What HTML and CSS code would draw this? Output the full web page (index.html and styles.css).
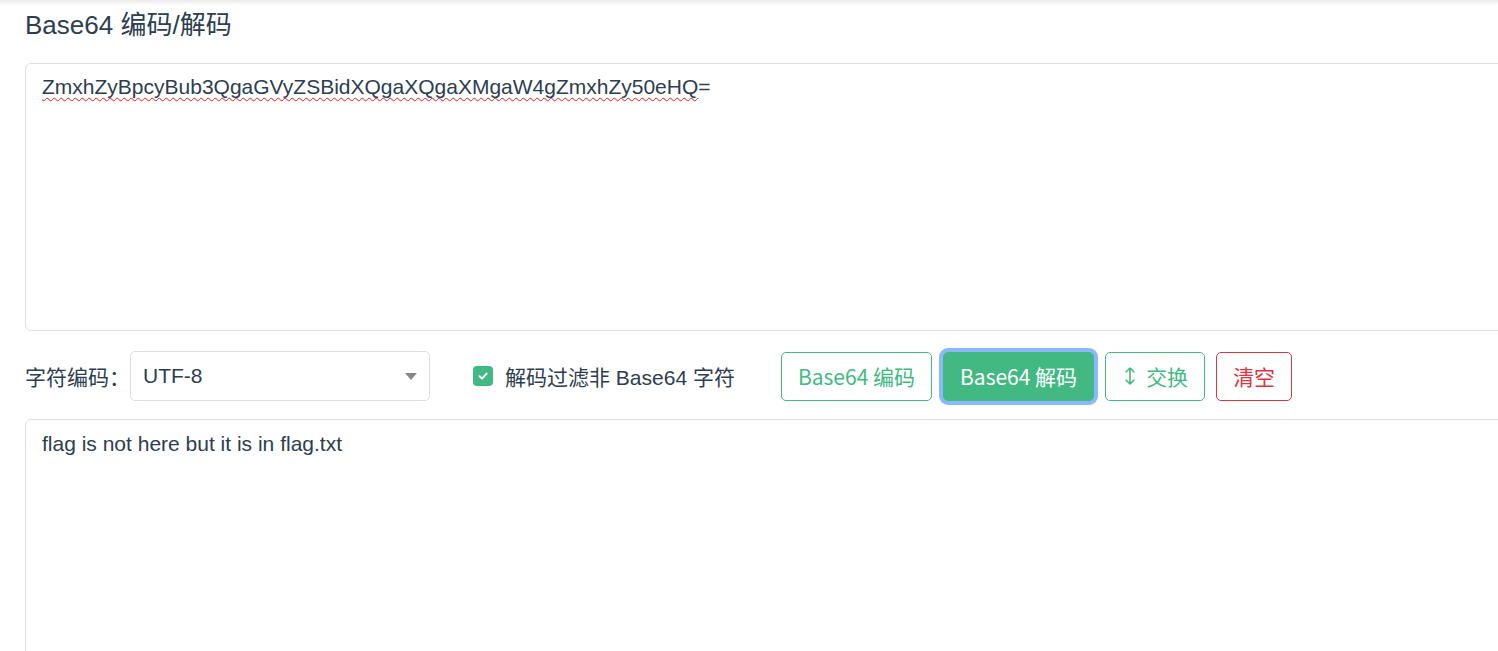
FILE: index.html
```html
<!DOCTYPE html>
<html lang="zh-CN">
<head>
    <meta charset="UTF-8">
    <meta name="viewport" content="width=device-width, initial-scale=1.0">
    <title>Base64 编码/解码</title>
    <link rel="stylesheet" href="styles.css">
</head>
<body>
    <div class="top-shade"></div>
    <div class="tool">
        <h1>Base64 编码/解码</h1>

        <div class="textbox source"><span class="misspelt">ZmxhZyBpcyBub3QgaGVyZSBidXQgaXQgaXMgaW4gZmxhZy50eHQ</span>=</div>

        <div class="controls">
            <label class="field-label">字符编码：</label>
            <div class="select">
                <span>UTF-8</span>
                <span class="caret"></span>
            </div>

            <label class="check">
                <span class="check-box">
                    <svg width="12" height="12" viewBox="0 0 12 12"><path d="M2.5 6.2 L5 8.6 L9.6 3.6" fill="none" stroke="#fff" stroke-width="2" stroke-linecap="round" stroke-linejoin="round"/></svg>
                </span>
                解码过滤非 Base64 字符
            </label>

            <div class="buttons">
                <button class="btn btn-outline">Base64 编码</button>
                <button class="btn btn-fill focused">Base64 解码</button>
                <button class="btn btn-outline">
                    <svg class="swap-icon" width="16" height="20" viewBox="0 0 16 20"><path d="M8 2 V18 M4 6 L8 2 L12 6 M4 14 L8 18 L12 14" fill="none" stroke="#42b983" stroke-width="1.6" stroke-linecap="round" stroke-linejoin="round"/></svg>
                    交换
                </button>
                <button class="btn btn-danger">清空</button>
            </div>
        </div>

        <div class="textbox result">flag is not here but it is in flag.txt</div>
    </div>
</body>
</html>
```

FILE: styles.css
```css
html, body {
    margin: 0;
    padding: 0;
    background: #fff;
    overflow: hidden;
}
body {
    font-family: "Liberation Sans", "Noto Sans CJK SC", sans-serif;
    color: #2c3e50;
}
.top-shade {
    height: 6px;
    margin-bottom: -6px;
    background: linear-gradient(rgba(0, 0, 0, 0.07), rgba(0, 0, 0, 0));
}
.tool {
    width: 1600px;
    padding-left: 25px;
}
h1 {
    margin: 0;
    font-size: 26px;
    font-weight: normal;
    line-height: 50px;
}
.textbox {
    box-sizing: border-box;
    border: 1px solid #dcdfe6;
    border-radius: 6px;
    padding: 8px 16px 7px;
    font-size: 21px;
    line-height: 1.4;
    white-space: pre-wrap;
}
.source {
    margin-top: 13px;
    height: 268px;
}
.misspelt {
    text-decoration: underline wavy #f01818;
    text-decoration-thickness: 1.4px;
    text-underline-offset: 3px;
    text-decoration-skip-ink: none;
}
.result {
    margin-top: 18px;
    height: 300px;
    padding-top: 9px;
}
.controls {
    display: flex;
    align-items: center;
    margin-top: 20px;
    height: 50px;
}
.field-label {
    font-size: 21px;
}
.select {
    box-sizing: border-box;
    width: 300px;
    height: 50px;
    border: 1px solid #dcdfe6;
    border-radius: 5px;
    display: flex;
    align-items: center;
    justify-content: space-between;
    padding: 0 12px;
    font-size: 21px;
}
.caret {
    width: 0;
    height: 0;
    border-left: 6px solid transparent;
    border-right: 6px solid transparent;
    border-top: 7px solid #888;
}
.check {
    display: flex;
    align-items: center;
    margin-left: 43px;
    font-size: 21px;
}
.check-box {
    width: 20px;
    height: 20px;
    border-radius: 4px;
    background: #42b983;
    display: flex;
    align-items: center;
    justify-content: center;
    margin-right: 12px;
}
.buttons {
    display: flex;
    gap: 11px;
    margin-left: 46px;
}
.btn {
    box-sizing: border-box;
    height: 49px;
    padding: 0 16px;
    border-radius: 5px;
    font-family: "Noto Sans CJK SC", "Noto Sans", sans-serif;
    font-size: 21px;
    background: #fff;
    display: flex;
    align-items: center;
    gap: 8px;
}
.btn-outline {
    border: 1px solid #42b983;
    color: #42b983;
}
.btn-fill {
    border: 1px solid #42b983;
    background: #42b983;
    color: #fff;
}
.focused {
    box-shadow: 0 0 0 4px #8ab8fb;
}
.btn-danger {
    border: 1px solid #dc3545;
    color: #dc3545;
}
.swap-icon {
    display: block;
}
```
